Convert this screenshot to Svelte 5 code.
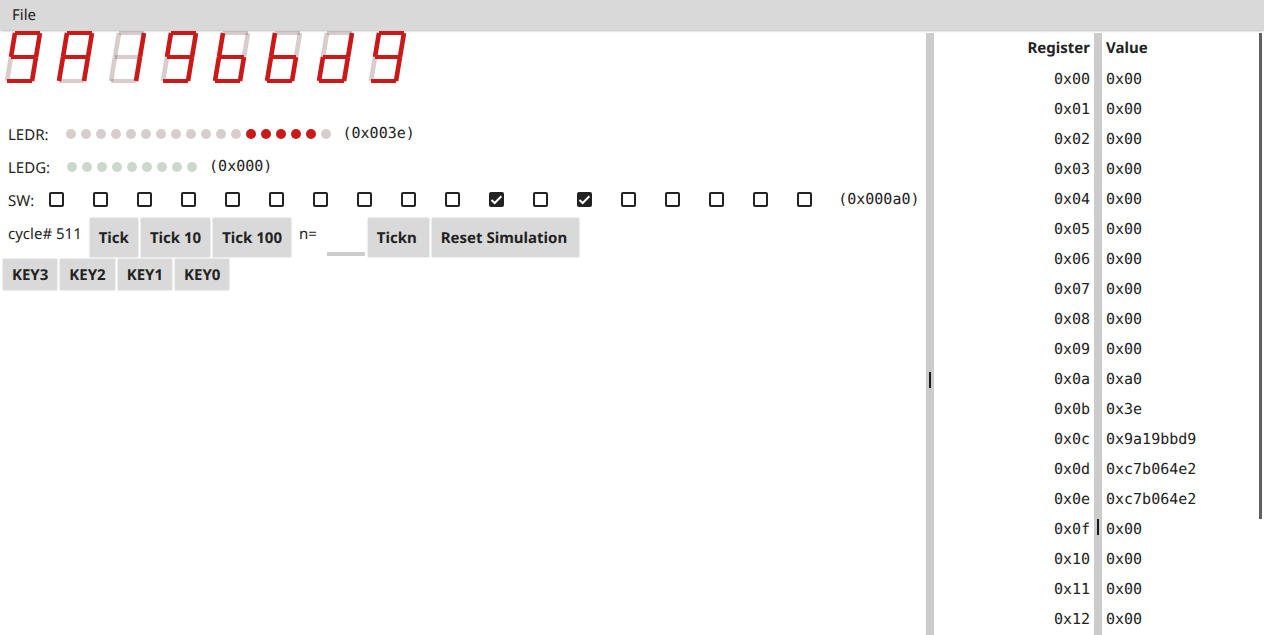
<script>
  // Segment end points, in the order a to g.
  const segments = [
    [15, 2, 40, 2],
    [40, 2, 36, 26],
    [36, 26, 32, 50],
    [7, 50, 32, 50],
    [11, 26, 7, 50],
    [15, 2, 11, 26],
    [11, 26, 36, 26]
  ];
  const shapes = { '9': 'abcdfg', A: 'abcefg', '1': 'bc', b: 'cdefg', d: 'bcdeg' };
  const digits = [...'9A19bbd9'].map((char) =>
    segments
      .map((line, i) => ({ line, on: shapes[char].includes('abcdefg'[i]) }))
      .sort((a, b) => a.on - b.on)
  );

  const bits = (value, count) =>
    Array.from({ length: count }, (_, i) => ((value >> (count - 1 - i)) & 1) === 1);
  const ledr = bits(0x3e, 18);
  const ledg = bits(0, 9);
  let switches = $state(bits(0xa0, 18));
  let n = $state('');

  const values = { 10: '0xa0', 11: '0x3e', 12: '0x9a19bbd9', 13: '0xc7b064e2', 14: '0xc7b064e2' };
  const registers = Array.from({ length: 19 }, (_, i) => ({
    name: '0x' + i.toString(16).padStart(2, '0'),
    value: values[i] ?? '0x00'
  }));
</script>

<div class="app">
  <header><button class="menu">File</button></header>
  <div class="panes">
    <main>
      <div class="display">
        {#each digits as digit}
          <svg width="52" height="56" viewBox="0 0 52 56" aria-hidden="true">
            {#each digit as { line, on }}
              <line class:on class:slanted={line[1] !== line[3]} x1={line[0]} y1={line[1]} x2={line[2]} y2={line[3]} />
            {/each}
          </svg>
        {/each}
      </div>
      <div class="row">
        <span>LEDR:</span>
        <div class="leds">{#each ledr as on}<i class="red" class:on></i>{/each}</div>
        <code>(0x003e)</code>
      </div>
      <div class="row">
        <span>LEDG:</span>
        <div class="leds">{#each ledg as on}<i class="green" class:on></i>{/each}</div>
        <code>(0x000)</code>
      </div>
      <div class="row">
        <span>SW:</span>
        <div class="switches">
          {#each switches as _, i}
            <label>
              <input type="checkbox" aria-label={`SW${17 - i}`} bind:checked={switches[i]} />
              <svg width="15" height="15" viewBox="0 0 15 15" aria-hidden="true"><path d="M2.5 8 L5.7 11 L12.3 4.2" /></svg>
            </label>
          {/each}
        </div>
        <code>(0x000a0)</code>
      </div>
      <div class="controls">
        <span class="cycle">cycle# 511</span>
        <button>Tick</button>
        <button>Tick 10</button>
        <button>Tick 100</button>
        <label class="count" for="n">n=</label>
        <input class="number" id="n" type="text" bind:value={n} />
        <button class="wide">Tickn</button>
        <button class="wide">Reset Simulation</button>
      </div>
      <div class="keys">
        {#each [3, 2, 1, 0] as key}<button>KEY{key}</button>{/each}
      </div>
    </main>
    <div class="splitter"></div>
    <aside>
      <div class="scroll">
        <div class="sheet">
          <table>
            <thead><tr><th>Register</th><th>Value</th></tr></thead>
            <tbody>
              {#each registers as register}
                <tr><td>{register.name}</td><td>{register.value}</td></tr>
              {/each}
            </tbody>
          </table>
        </div>
      </div>
      <div class="thumb"></div>
    </aside>
  </div>
</div>

<style>
  :global(body) {
    margin: 0;
    background: #fff;
  }
  .app {
    display: flex;
    flex-direction: column;
    height: 100vh;
    overflow: hidden;
    color: #222;
    font: 15px/20px 'Noto Sans', sans-serif;
    text-rendering: geometricPrecision;
  }
  button,
  input {
    font: inherit;
    color: inherit;
    margin: 0;
    border: 0;
    border-radius: 0;
    text-rendering: inherit;
  }
  header {
    flex: none;
    height: 30px;
    margin-bottom: 3px;
    background: #d9d9d9;
    box-shadow: 0 1px 2px #bbb;
  }
  .menu {
    height: 30px;
    padding: 0 12px;
    background: none;
  }
  .panes {
    flex: 1;
    min-height: 0;
    display: flex;
  }
  main {
    flex: 1;
    min-width: 0;
  }
  .display {
    display: flex;
    height: 86px;
    margin-top: -2px;
  }
  .display svg {
    flex: none;
  }
  line {
    stroke: rgba(60, 0, 0, 0.2);
    stroke-width: 4;
  }
  line.slanted {
    stroke-width: 4.6;
  }
  line.on {
    stroke: #c91919;
  }
  .row {
    display: flex;
    align-items: center;
    height: 33px;
    padding-left: 8px;
  }
  .row span {
    padding-top: 2px;
  }
  code {
    font: 15px/20px 'DejaVu Sans Mono', monospace;
    padding-bottom: 2px;
  }
  .leds {
    display: flex;
    gap: 5px;
    margin: 0 12px 0 17px;
  }
  .leds i {
    width: 10px;
    height: 10px;
    border-radius: 50%;
  }
  .red {
    background: #d8cdcd;
  }
  .green {
    background: #cdd8cd;
  }
  .red.on {
    background: #c91919;
  }
  .switches {
    display: flex;
    gap: 29px;
    margin: 0 26px 0 15px;
  }
  .switches label {
    display: grid;
  }
  .switches label > * {
    grid-area: 1 / 1;
  }
  .switches input {
    appearance: none;
    box-sizing: border-box;
    width: 15px;
    height: 15px;
    border: 2px solid #222;
    border-radius: 2px;
  }
  .switches input:checked {
    background: #222;
  }
  .switches path {
    fill: none;
    stroke: #fff;
    stroke-width: 2;
    visibility: hidden;
  }
  .switches input:checked + svg path {
    visibility: visible;
  }
  .switches svg {
    pointer-events: none;
  }
  .controls {
    display: flex;
    gap: 3px;
    margin-top: 2px;
    height: 39px;
  }
  .controls button,
  .keys button {
    padding: 0 9px;
    background: #d9d9d9;
    box-shadow: 0 0 2px #ccc;
    font-weight: bold;
    white-space: nowrap;
  }
  .controls .wide {
    padding-right: 12px;
  }
  .cycle {
    padding: 6px 5px 0 8px;
  }
  .count {
    padding: 6px 7px 0 5px;
  }
  .number {
    box-sizing: border-box;
    width: 38px;
    height: 38px;
    padding: 0;
    border-bottom: 4px solid #ccc;
    background: none;
    outline: 0;
  }
  .keys {
    display: flex;
    gap: 3px;
    height: 31px;
    padding: 2px 3px;
  }
  .splitter {
    flex: none;
    position: relative;
    width: 8px;
    background: #ccc;
  }
  .splitter::after,
  .sheet::after {
    content: '';
    position: absolute;
    left: 3px;
    top: 339px;
    width: 2px;
    height: 16px;
    background: #1a1a1a;
  }
  aside {
    flex: none;
    position: relative;
    width: 330px;
  }
  .scroll {
    height: 100%;
    overflow: auto;
    scrollbar-width: none;
  }
  .sheet {
    position: relative;
    height: 100%;
    background: linear-gradient(#ccc, #ccc) 160px 0 / 8px 100% no-repeat;
  }
  .sheet::after {
    left: 163px;
    top: 486px;
  }
  table {
    width: 100%;
    table-layout: fixed;
    border-spacing: 0;
  }
  th,
  td {
    box-sizing: border-box;
    height: 30px;
    padding: 0 4px;
    text-align: left;
  }
  td {
    padding-top: 2px;
    font: 15px/20px 'DejaVu Sans Mono', monospace;
  }
  th:first-child,
  td:first-child {
    width: 168px;
    padding-right: 12px;
    text-align: right;
  }
  .thumb {
    position: absolute;
    top: 0;
    right: 2px;
    width: 3px;
    height: 486px;
    background: #606060;
  }
</style>
